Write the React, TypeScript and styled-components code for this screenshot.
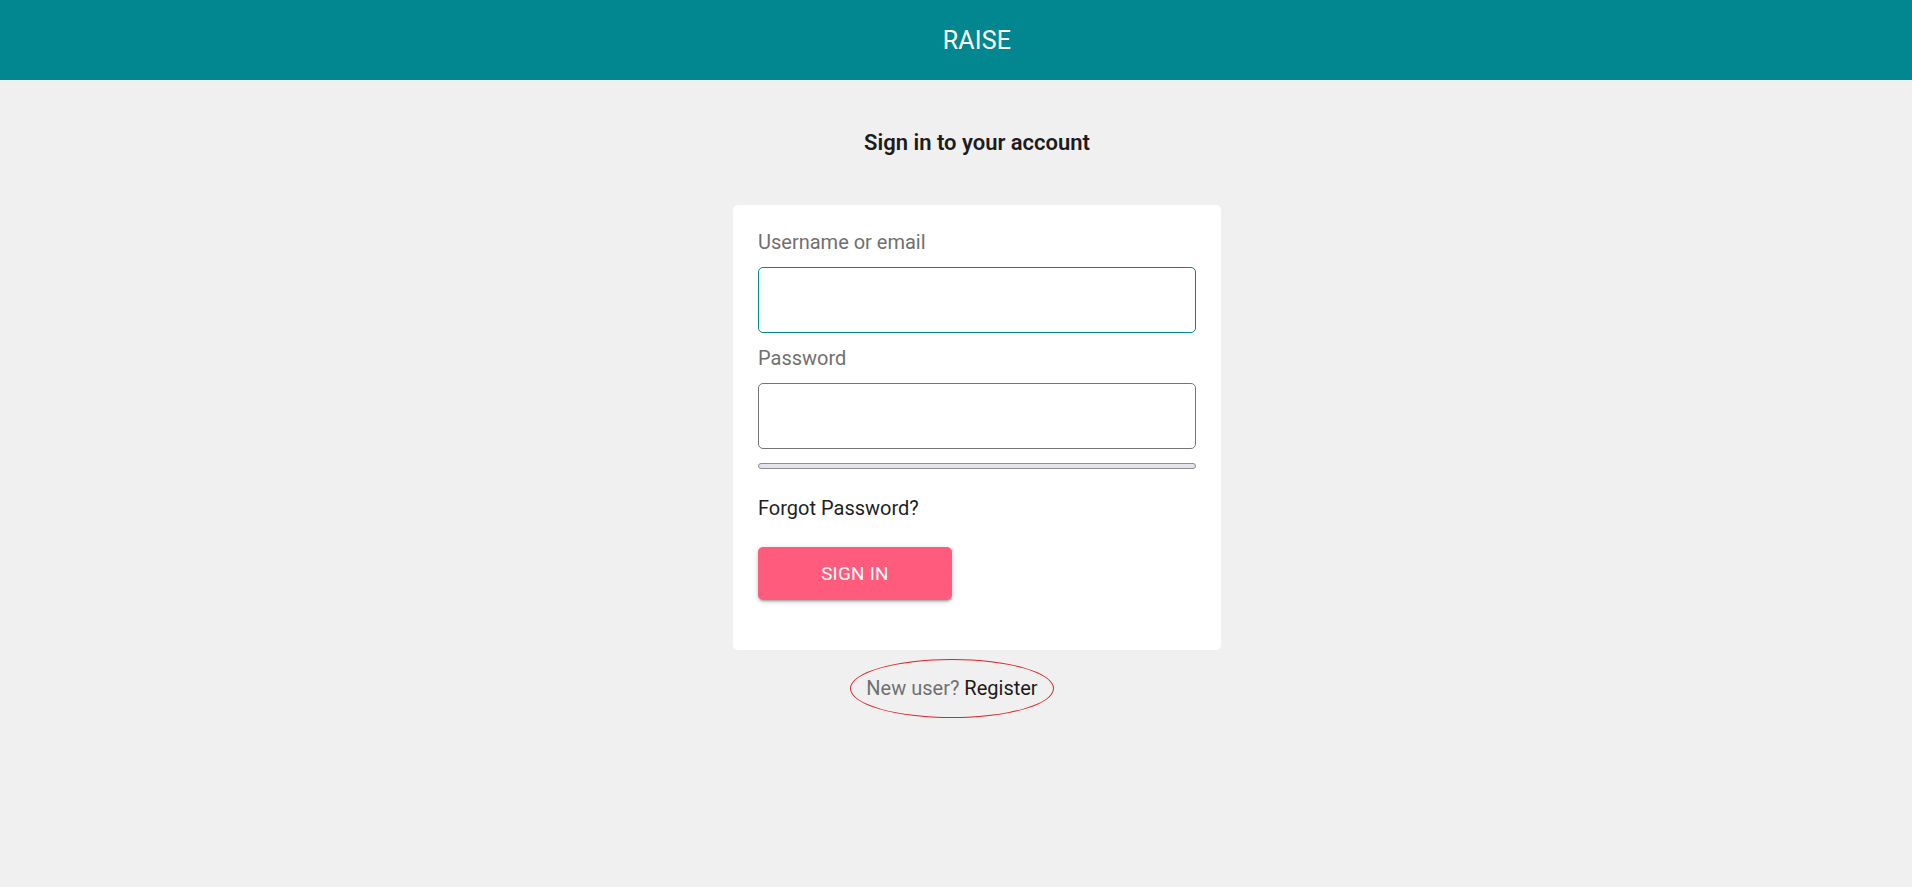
import React from "react";
import styled, { createGlobalStyle } from "styled-components";

const GlobalStyle = createGlobalStyle`
  html, body {
    margin: 0;
    padding: 0;
    background: #f0f0f0;
    font-family: Roboto, "Liberation Sans", Arial, sans-serif;
  }
`;

const Page = styled.div`
  min-height: 887px;
  background: #f0f0f0;
  display: flex;
  flex-direction: column;
`;

const Header = styled.header`
  height: 80px;
  background: #028690;
  display: flex;
  align-items: center;
  justify-content: center;
  padding-left: 42px;
`;

const Brand = styled.h1`
  margin: 0;
  color: #ffffff;
  font-size: 25px;
  font-weight: 400;
  letter-spacing: 0.2px;
`;

const Main = styled.main`
  display: flex;
  flex-direction: column;
  align-items: center;
  padding-left: 42px;
`;

const Title = styled.h2`
  margin: 50px 0 49px;
  font-size: 22px;
  font-weight: 600;
  color: #1c1c1c;
  line-height: 26px;
`;

const Card = styled.form`
  width: 488px;
  box-sizing: border-box;
  background: #ffffff;
  border-radius: 5px;
  padding: 26px 25px 50px;
  display: flex;
  flex-direction: column;
`;

const Label = styled.label`
  font-size: 20px;
  line-height: 23px;
  color: #707070;
  margin-bottom: 13px;
`;

const Input = styled.input<{ $focused?: boolean }>`
  box-sizing: border-box;
  width: 100%;
  height: 66px;
  border-radius: 5px;
  border: ${(p) => (p.$focused ? "1.5px solid #02868f" : "1px solid #767676")};
  outline: none;
  font-size: 20px;
  padding: 0 16px;
  margin-bottom: 14px;
  background: #fff;
`;

const StrengthBar = styled.div`
  box-sizing: border-box;
  height: 6px;
  width: 100%;
  border: 1px solid #8d8d99;
  background: #e3e3ec;
  border-radius: 3px;
`;

const ForgotLink = styled.a`
  margin-top: 28px;
  font-size: 20px;
  line-height: 23px;
  color: #1f1f1f;
  text-decoration: none;
  cursor: pointer;
`;

const SignInButton = styled.button`
  margin-top: 27px;
  width: 194px;
  height: 53px;
  border: none;
  border-radius: 5px;
  background: #ff5b7d;
  color: #ffffff;
  font-family: inherit;
  font-size: 18.75px;
  font-weight: 400;
  letter-spacing: 0.3px;
  text-transform: uppercase;
  box-shadow: 0 3px 2px -2px rgba(0, 0, 0, 0.2), 0 2px 3px 0 rgba(0, 0, 0, 0.14),
    0 1px 6px 0 rgba(0, 0, 0, 0.12);
  cursor: pointer;
`;

const FooterRow = styled.div`
  margin-top: 9px;
  padding-right: 50px;
  display: flex;
  justify-content: center;
`;

const Highlight = styled.span`
  display: inline-block;
  padding: 17px 15px;
  border: 1px solid #d9262a;
  border-radius: 50%;
  font-size: 20px;
  line-height: 23px;
`;

const Muted = styled.span`
  color: #707070;
`;

const RegisterLink = styled.a`
  color: #1a1a1a;
  text-decoration: none;
  cursor: pointer;
`;

export default function App() {
  return (
    <Page>
      <GlobalStyle />
      <Header>
        <Brand>RAISE</Brand>
      </Header>
      <Main>
        <Title>Sign in to your account</Title>
        <Card onSubmit={(e) => e.preventDefault()}>
          <Label htmlFor="username">Username or email</Label>
          <Input id="username" type="text" $focused />
          <Label htmlFor="password">Password</Label>
          <Input id="password" type="password" />
          <StrengthBar />
          <ForgotLink>Forgot Password?</ForgotLink>
          <div>
            <SignInButton type="submit">Sign in</SignInButton>
          </div>
        </Card>
        <FooterRow>
          <Highlight>
            <Muted>New user? </Muted>
            <RegisterLink>Register</RegisterLink>
          </Highlight>
        </FooterRow>
      </Main>
    </Page>
  );
}
